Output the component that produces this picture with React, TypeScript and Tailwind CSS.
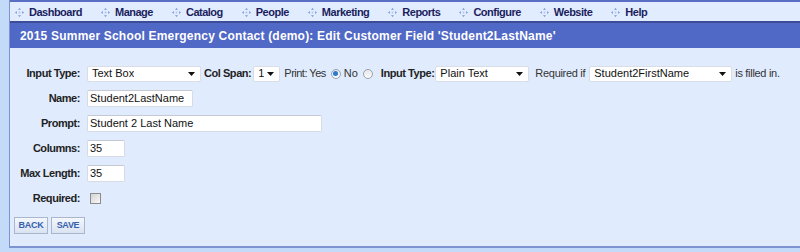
import React from 'react';

const NAV = ['Dashboard', 'Manage', 'Catalog', 'People', 'Marketing', 'Reports', 'Configure', 'Website', 'Help'];

function NavIcon() {
  return (
    <svg width="9" height="9" viewBox="0 0 9 9" aria-hidden className="shrink-0">
      <path d="M4.5 0 L6 1.8 L3 1.8 Z" fill="#7b95d8" />
      <path d="M4.5 9 L6 7.2 L3 7.2 Z" fill="#7b95d8" />
      <path d="M0 4.5 L1.8 3 L1.8 6 Z" fill="#7b95d8" />
      <path d="M9 4.5 L7.2 3 L7.2 6 Z" fill="#7b95d8" />
      <rect x="3.6" y="3.6" width="1.8" height="1.8" fill="#b7c6ec" />
    </svg>
  );
}

function Select({ value, w }: { value: string; w: string }) {
  return (
    <div
      className={`${w} flex h-[16px] items-center justify-between rounded-[2px] border border-[#d8dde6] bg-white pl-[4px] pr-[5px] text-[11px] text-[#111]`}
    >
      <span className="truncate">{value}</span>
      <svg width="7" height="4" viewBox="0 0 7 4" aria-hidden>
        <path d="M0 0 H7 L3.5 4 Z" fill="#111" />
      </svg>
    </div>
  );
}

function TextInput({ value, w }: { value: string; w: string }) {
  return (
    <div
      className={`${w} flex h-[17px] items-center rounded-[2px] border border-[#d6dbe4] border-t-[#c4c9d2] bg-white px-[2px] text-[11px] text-[#111]`}
    >
      {value}
    </div>
  );
}

function Radio({ on }: { on?: boolean }) {
  return (
    <span className="flex h-[10px] w-[10px] items-center justify-center rounded-full border border-[#9aa3ad] bg-gradient-to-b from-[#e6e8eb] to-[#fafafa]">
      {on && <span className="h-[5px] w-[5px] rounded-full bg-[#2a7bd0]" />}
    </span>
  );
}

function Row({ label, children }: { label: string; children?: React.ReactNode }) {
  return (
    <div className="flex h-[25px] items-center">
      <div className="w-[70px] shrink-0 text-right text-[11px] font-bold tracking-[-0.45px] text-[#222]">{label}</div>
      <div className="ml-[7px] flex items-center">{children}</div>
    </div>
  );
}

export default function App() {
  return (
    <div className="flex h-[252px] w-[800px] bg-[#c3daf9] pb-[4px] pl-[9px] font-['Liberation_Sans',Arial,sans-serif]">
      <div className="flex flex-1 flex-col border-b-2 border-l border-[#7d93d2] bg-[#e0ecfe]">
        {/* top menu */}
        <nav className="flex h-[23px] items-center border-t-2 border-b-2 border-t-[#5a6fc4] border-b-[#3e4c98] bg-[#e1edff] pl-[5px] pt-[1px] text-[11px] font-bold tracking-[-0.5px] text-[#1b1d5e]">
          {NAV.map((n) => (
            <div key={n} className="mr-[19px] flex items-center gap-[5px]">
              <NavIcon />
              <span>{n}</span>
            </div>
          ))}
        </nav>

        {/* title bar */}
        <div className="flex h-[25px] items-center bg-[#5068c6] pl-[10px] text-[12px] font-bold tracking-[0.2px] text-white">
          2015 Summer School Emergency Contact (demo): Edit Customer Field &apos;Student2LastName&apos;
        </div>

        <div className="pt-[13px]">
          <Row label="Input Type:">
            <Select value="Text Box" w="w-[114px]" />
            <span className="ml-[3px] text-[11px] font-bold tracking-[-0.45px] text-[#222]">Col Span:</span>
            <div className="ml-[2px]">
              <Select value="1" w="w-[27px]" />
            </div>
            <span className="ml-[4px] text-[11px] tracking-[-0.5px] text-[#333]">Print: Yes</span>
            <span className="ml-[5px]">
              <Radio on />
            </span>
            <span className="ml-[3px] text-[11px] text-[#333]">No</span>
            <span className="ml-[5px]">
              <Radio />
            </span>
            <span className="ml-[8px] text-[11px] font-bold tracking-[-0.45px] text-[#222]">Input Type:</span>
            <div className="ml-[1px]">
              <Select value="Plain Text" w="w-[94px]" />
            </div>
            <span className="ml-[6px] text-[11px] tracking-[-0.3px] text-[#333]">Required if</span>
            <div className="ml-[4px]">
              <Select value="Student2FirstName" w="w-[143px]" />
            </div>
            <span className="ml-[3px] text-[11px] tracking-[-0.3px] text-[#333]">is filled in.</span>
          </Row>
          <Row label="Name:">
            <TextInput value="Student2LastName" w="w-[106px]" />
          </Row>
          <Row label="Prompt:">
            <TextInput value="Student 2 Last Name" w="w-[235px]" />
          </Row>
          <Row label="Columns:">
            <TextInput value="35" w="w-[38px]" />
          </Row>
          <Row label="Max Length:">
            <TextInput value="35" w="w-[38px]" />
          </Row>
          <Row label="Required:">
            <span className="ml-[3px] h-[11px] w-[11px] border border-[#8c8c8c] bg-gradient-to-br from-[#d4d4d4] to-[#f8f8f8]" />
          </Row>

          <div className="mt-[6px] flex gap-[3px] pl-[4px]">
            {['BACK', 'SAVE'].map((b) => (
              <button
                key={b}
                className="flex h-[17px] w-[34px] items-center justify-center border border-[#a9b6cc] bg-gradient-to-b from-[#f4f7fc] to-[#d9e3f1] text-[9px] font-bold tracking-[-0.3px] text-[#3560b0]"
              >
                {b}
              </button>
            ))}
          </div>
        </div>
      </div>
    </div>
  );
}
